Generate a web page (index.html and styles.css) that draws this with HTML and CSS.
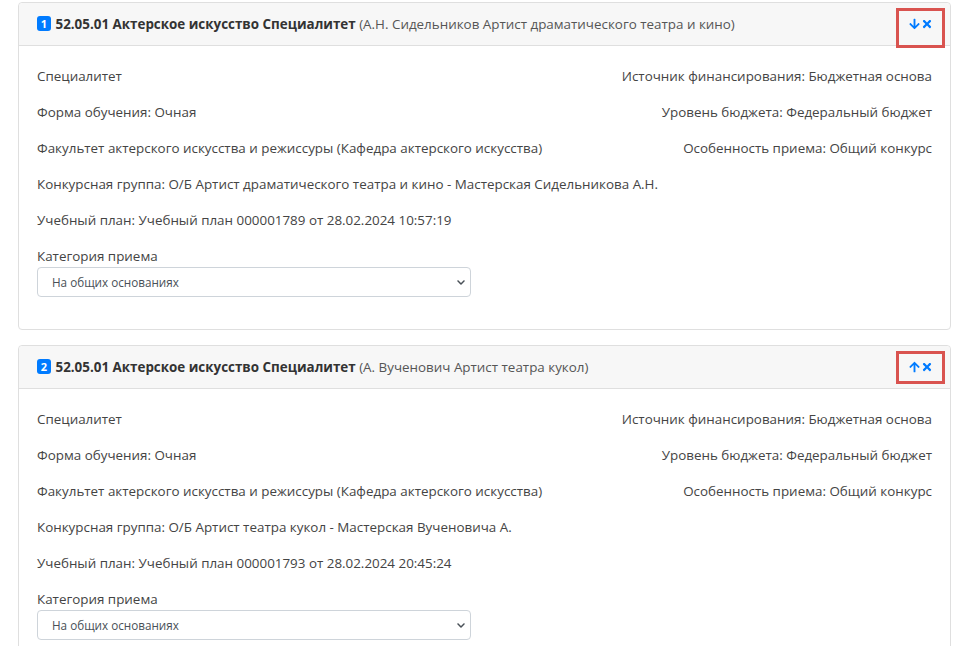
FILE: index.html
```html
<!DOCTYPE html>
<html lang="ru">
<head>
    <meta charset="UTF-8">
    <meta name="viewport" content="width=device-width, initial-scale=1.0">
    <title>Выбранные конкурсы</title>
    <link rel="stylesheet" href="styles.css">
</head>
<body>
    <div class="card">
        <div class="card-header">
            <div class="card-title">
                <span class="badge">1</span>
                <b>52.05.01 Актерское искусство Специалитет</b>
                <span class="muted">(А.Н. Сидельников Артист драматического театра и кино)</span>
            </div>
            <div class="actions">
                <svg class="icon" viewBox="0 0 448 512"><path d="M413.1 222.5l22.2 22.2c9.4 9.4 9.4 24.6 0 33.9L241 473c-9.4 9.4-24.6 9.4-33.9 0L12.7 278.6c-9.4-9.4-9.4-24.6 0-33.9l22.2-22.2c9.5-9.5 25-9.3 34.3.4L184 343.4V56c0-13.3 10.7-24 24-24h32c13.300 0 24 10.7 24 24v287.4l114.8-120.5c9.3-9.8 24.8-10 34.3-.4z"/></svg>
                <svg class="icon icon-x" viewBox="0 0 352 512"><path d="M242.72 256l100.07-100.07c12.28-12.28 12.28-32.19 0-44.48l-22.24-22.24c-12.28-12.28-32.19-12.28-44.48 0L176 189.28 75.930 89.21c-12.28-12.28-32.19-12.28-44.48 0L9.21 111.45c-12.28 12.28-12.28 32.19 0 44.48L109.28 256 9.21 356.07c-12.28 12.28-12.28 32.19 0 44.48l22.24 22.24c12.28 12.28 32.2 12.28 44.48 0L176 322.72l100.07 100.07c12.28 12.28 32.2 12.28 44.48 0l22.24-22.24c12.28-12.28 12.28-32.19 0-44.48L242.72 256z"/></svg>
            </div>
            <!-- рамка-выделение вокруг кнопок -->
            <div class="mark mark-tall"></div>
        </div>
        <div class="card-body">
            <div class="row"><span>Специалитет</span><span>Источник финансирования: Бюджетная основа</span></div>
            <div class="row"><span>Форма обучения: Очная</span><span>Уровень бюджета: Федеральный бюджет</span></div>
            <div class="row"><span>Факультет актерского искусства и режиссуры (Кафедра актерского искусства)</span><span>Особенность приема: Общий конкурс</span></div>
            <div class="row"><span>Конкурсная группа: О/Б Артист драматического театра и кино - Мастерская Сидельникова А.Н.</span></div>
            <div class="row"><span>Учебный план: Учебный план 000001789 от 28.02.2024 10:57:19</span></div>
            <label class="field-label">Категория приема</label>
            <div class="select-wrap">
                <select>
                    <option>На общих основаниях</option>
                </select>
                <svg class="chevron" viewBox="0 0 448 512"><path d="M207.029 381.476L12.686 187.132c-9.373-9.373-9.373-24.569 0-33.941l22.667-22.667c9.357-9.357 24.522-9.375 33.901-.04L224 284.505l154.745-154.021c9.379-9.335 24.544-9.317 33.901.04l22.667 22.667c9.373 9.373 9.373 24.569 0 33.941L240.971 381.476c-9.373 9.372-24.569 9.372-33.942 0z"/></svg>
            </div>
        </div>
    </div>

    <div class="card">
        <div class="card-header">
            <div class="card-title">
                <span class="badge">2</span>
                <b>52.05.01 Актерское искусство Специалитет</b>
                <span class="muted">(А. Вученович Артист театра кукол)</span>
            </div>
            <div class="actions">
                <svg class="icon" viewBox="0 0 448 512"><path d="M34.9 289.5l-22.2-22.2c-9.4-9.4-9.4-24.6 0-33.9L207 39c9.4-9.4 24.6-9.4 33.9 0l194.3 194.3c9.4 9.4 9.4 24.6 0 33.9L413 289.4c-9.5 9.5-25 9.3-34.3-.4L264 168.6V456c0 13.3-10.7 24-24 24h-32c-13.3 0-24-10.7-24-24V168.6L69.2 289.1c-9.3 9.8-24.8 10-34.3.4z"/></svg>
                <svg class="icon icon-x" viewBox="0 0 352 512"><path d="M242.72 256l100.07-100.07c12.28-12.28 12.28-32.19 0-44.48l-22.24-22.24c-12.28-12.28-32.19-12.28-44.48 0L176 189.28 75.930 89.21c-12.28-12.28-32.19-12.28-44.48 0L9.21 111.45c-12.28 12.28-12.28 32.19 0 44.48L109.28 256 9.21 356.07c-12.28 12.28-12.28 32.19 0 44.48l22.24 22.24c12.28 12.28 32.2 12.28 44.48 0L176 322.72l100.07 100.07c12.28 12.28 32.2 12.28 44.48 0l22.24-22.24c12.28-12.28 12.28-32.19 0-44.48L242.72 256z"/></svg>
            </div>
            <div class="mark mark-short"></div>
        </div>
        <div class="card-body">
            <div class="row"><span>Специалитет</span><span>Источник финансирования: Бюджетная основа</span></div>
            <div class="row"><span>Форма обучения: Очная</span><span>Уровень бюджета: Федеральный бюджет</span></div>
            <div class="row"><span>Факультет актерского искусства и режиссуры (Кафедра актерского искусства)</span><span>Особенность приема: Общий конкурс</span></div>
            <div class="row"><span>Конкурсная группа: О/Б Артист театра кукол - Мастерская Вученовича А.</span></div>
            <div class="row"><span>Учебный план: Учебный план 000001793 от 28.02.2024 20:45:24</span></div>
            <label class="field-label">Категория приема</label>
            <div class="select-wrap">
                <select>
                    <option>На общих основаниях</option>
                </select>
                <svg class="chevron" viewBox="0 0 448 512"><path d="M207.029 381.476L12.686 187.132c-9.373-9.373-9.373-24.569 0-33.941l22.667-22.667c9.357-9.357 24.522-9.375 33.901-.04L224 284.505l154.745-154.021c9.379-9.335 24.544-9.317 33.901.04l22.667 22.667c9.373 9.373 9.373 24.569 0 33.941L240.971 381.476c-9.373 9.372-24.569 9.372-33.942 0z"/></svg>
            </div>
        </div>
    </div>
</body>
</html>
```

FILE: styles.css
```css
* {
    margin: 0;
    padding: 0;
    box-sizing: border-box;
}
body {
    background: #fff;
    padding: 2px 17px 0 18px;
    font-family: "Open Sans", "Noto Sans", sans-serif;
    font-size: 13.4px;
    line-height: 20px;
    color: #444;
}
.card {
    border: 1px solid #dfdfdf;
    border-radius: 4px;
    margin-bottom: 15px;
    background: #fff;
}
.card-header {
    position: relative;
    display: flex;
    align-items: center;
    justify-content: space-between;
    height: 43px;
    padding: 0 18px;
    background: #f7f7f7;
    border-bottom: 1px solid #dfdfdf;
    border-radius: 4px 4px 0 0;
}
.card-title {
    color: #555;
    white-space: nowrap;
}
.card-title b {
    color: #333;
    font-weight: 700;
}
.badge {
    display: inline-block;
    width: 14px;
    height: 15px;
    margin-right: 1px;
    border-radius: 3px;
    background: #007bff;
    color: #fff;
    font-size: 11px;
    font-weight: 700;
    line-height: 15px;
    text-align: center;
    vertical-align: 1px;
}
.actions {
    display: flex;
    align-items: center;
    gap: 2px;
}
.icon {
    width: 11px;
    height: 12px;
    fill: #007bff;
}
.icon-x {
    width: 10px;
}
.mark {
    position: absolute;
    right: 5px;
    width: 49px;
    border: 3px solid #d9534f;
}
.mark-tall {
    top: 5px;
    height: 40px;
}
.mark-short {
    top: 5px;
    height: 33px;
}
.card-body {
    padding: 20px 18px;
}
.row {
    display: flex;
    justify-content: space-between;
    margin-bottom: 16px;
}
.field-label {
    display: block;
    margin-bottom: 1px;
}
.select-wrap {
    position: relative;
    width: 434px;
    margin-bottom: 12px;
}
.select-wrap select {
    display: block;
    width: 100%;
    height: 30px;
    padding: 0 14px;
    border: 1px solid #ced4da;
    border-radius: 4px;
    background: #fff;
    color: #495057;
    font-family: inherit;
    font-size: 11.7px;
    appearance: none;
    -webkit-appearance: none;
}
.chevron {
    position: absolute;
    right: 5px;
    top: 11px;
    width: 10px;
    height: 9px;
    fill: #495057;
    pointer-events: none;
}
```
